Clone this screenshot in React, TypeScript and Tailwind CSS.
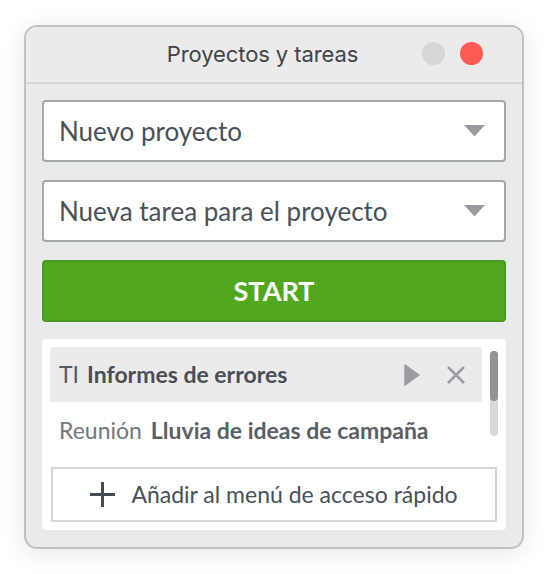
import React from "react";

const Caret = () => (
  <svg width="21" height="12" viewBox="0 0 21 12" className="shrink-0">
    <path d="M0 0 H21 L10.5 11.5 Z" fill="#999ca0" />
  </svg>
);

export default function App() {
  return (
    <div className="w-[548px] h-[574px] bg-white pt-[25px] pl-[24px]">
      <div className="w-[500px] h-[524px] rounded-[13px] border-2 border-[#c2c2c2] bg-[#e9eaea] shadow-[0_4px_24px_rgba(0,0,0,0.10)] overflow-hidden flex flex-col">
        <div className="h-[57px] shrink-0 bg-[#ebebeb] border-b-2 border-[#d6d6d6] flex items-center relative">
          <div className="w-full text-center pr-[23px] text-[22px] text-[#444446] font-['Inter',sans-serif] tracking-[-0.1px]">
            Proyectos y tareas
          </div>
          <div className="absolute right-[39px] top-[15px] flex gap-[15px]">
            <div className="w-[23px] h-[23px] rounded-full bg-[#d6d7d9]" />
            <div className="w-[23px] h-[23px] rounded-full bg-[#ff5a52]" />
          </div>
        </div>
        <div className="flex flex-col px-[16px] pt-[16px] gap-[18px] font-['Lato',sans-serif]">
          <div className="h-[62px] bg-white border-2 border-[#a3a6aa] rounded-[4px] flex items-center justify-between pl-[15px] pr-[19px]">
            <span className="text-[26px] text-[#4a5058]">Nuevo proyecto</span>
            <Caret />
          </div>
          <div className="h-[62px] bg-white border-2 border-[#a3a6aa] rounded-[4px] flex items-center justify-between pl-[15px] pr-[19px]">
            <span className="text-[26px] text-[#4a5058]">Nueva tarea para el proyecto</span>
            <Caret />
          </div>
          <div className="h-[62px] bg-[#51a81c] border-2 border-[#4a9a1f] rounded-[4px] flex items-center justify-center">
            <span className="text-[27px] font-bold text-white">START</span>
          </div>
          <div className="bg-white rounded-[4px] px-[8px] pt-[8px] pb-[8px] flex flex-col -mt-[1px]">
            <div className="flex">
              <div className="flex-1 flex flex-col">
                <div className="h-[55px] bg-[#ebebeb] rounded-[2px] flex items-center pl-[9px] pr-[16px]">
                  <span className="text-[23px] text-[#555b62]">TI</span>
                  <span className="text-[23px] font-bold text-[#4a4f55] ml-[8px]">Informes de errores</span>
                  <div className="flex-1" />
                  <svg width="16" height="22" viewBox="0 0 16 22">
                    <path d="M1 1 L15 11 L1 21 Z" fill="#9a9da1" stroke="#9a9da1" strokeWidth="1.5" strokeLinejoin="round" />
                  </svg>
                  <svg width="20" height="20" viewBox="0 0 20 20" className="ml-[26px]">
                    <path d="M2 2 L18 18 M18 2 L2 18" stroke="#9a9da1" strokeWidth="2.6" />
                  </svg>
                </div>
                <div className="h-[57px] flex items-center pl-[9px]">
                  <span className="text-[23px] text-[#72777c]">Reunión</span>
                  <span className="text-[23px] font-bold text-[#5a5f65] ml-[9px]">Lluvia de ideas de campaña</span>
                </div>
              </div>
              <div className="w-[8px] ml-[8px] mt-[4px] h-[85px] rounded-full bg-[#d9d9d9] flex flex-col">
                <div className="h-[50px] rounded-full bg-[#8f9296]" />
              </div>
            </div>
            <div className="h-[55px] mt-[8px] ml-[1px] w-[446px] border-2 border-[#d6d6d6] flex items-center justify-center gap-[16px]">
              <svg width="25" height="25" viewBox="0 0 25 25">
                <path d="M12.5 0 V25 M0 12.5 H25" stroke="#454b52" strokeWidth="3" />
              </svg>
              <span className="text-[23px] text-[#4a5058]">Añadir al menú de acceso rápido</span>
            </div>
          </div>
        </div>
      </div>
    </div>
  );
}
